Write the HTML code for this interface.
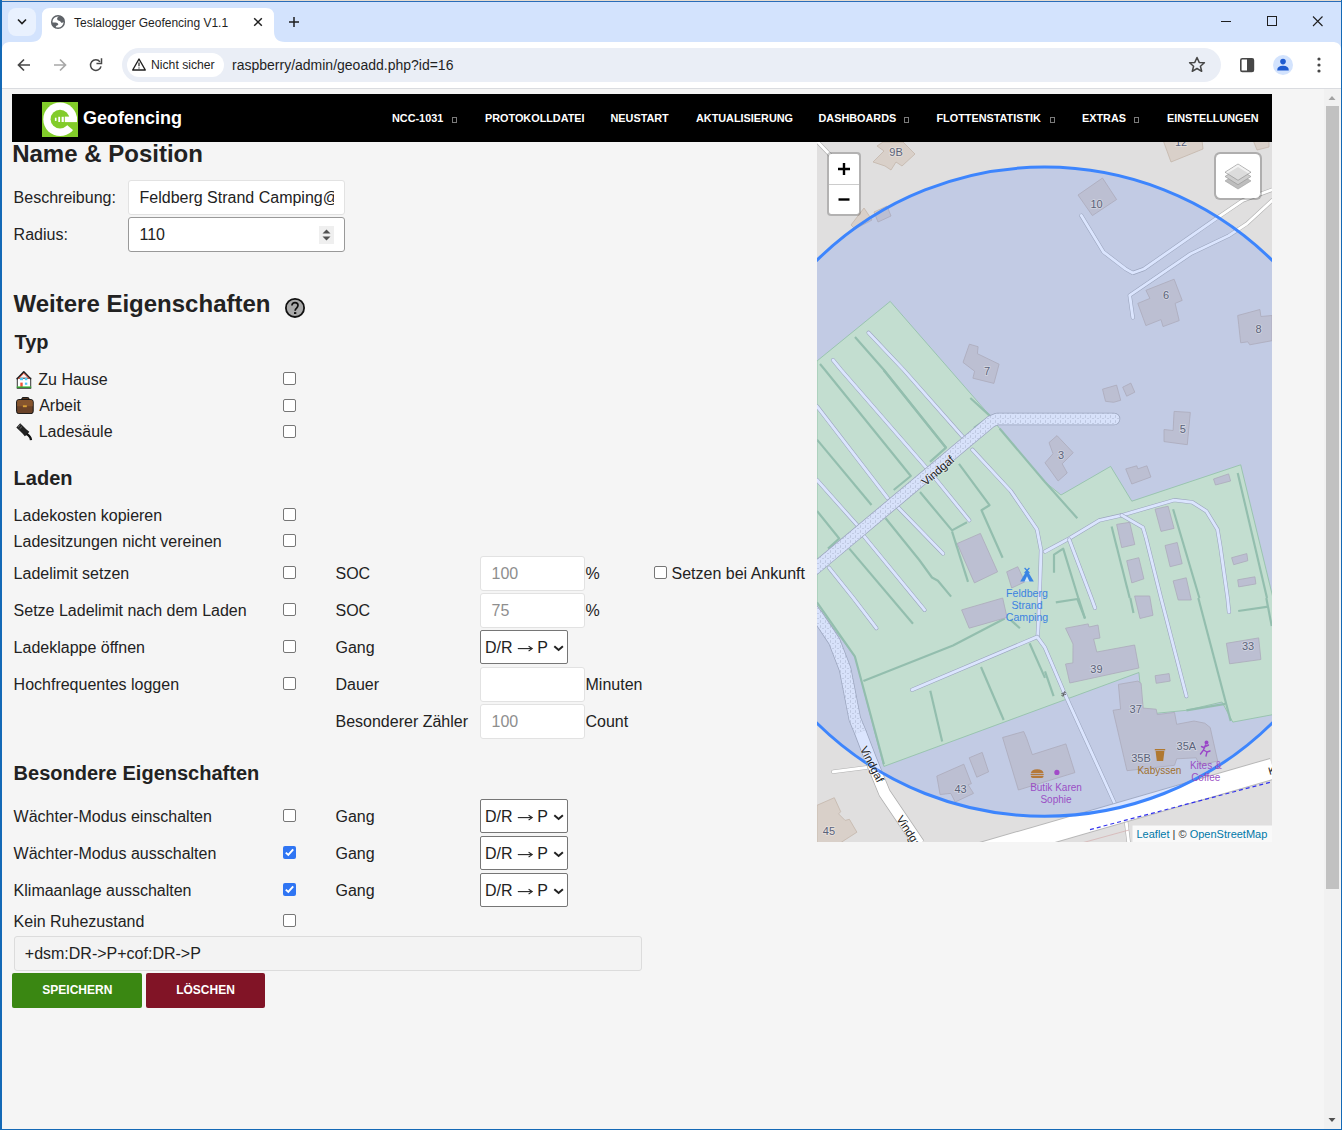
<!DOCTYPE html>
<html><head><meta charset="utf-8">
<style>
*{box-sizing:border-box}
html,body{margin:0;padding:0;width:1342px;height:1130px;overflow:hidden;background:#f5f5f5;font-family:"Liberation Sans",sans-serif;color:#222}
.a{position:absolute;white-space:nowrap}
#win{position:absolute;left:0;top:0;width:1342px;height:1130px;overflow:hidden}
.lbl{position:absolute;font-size:16px;line-height:16px;color:#222;white-space:nowrap}
.h{position:absolute;font-weight:bold;white-space:nowrap;color:#222}
.cb{position:absolute;width:13px;height:13px;border:1px solid #767676;border-radius:2px;background:#fff}
.cb.on{background:#2f76f4;border-color:#2f76f4}
.inp{position:absolute;background:#fff;border:1px solid #e6e6e6;border-radius:2px}
.sel{position:absolute;background:#fff;border:1px solid #767676;border-radius:2px}
.nav{position:absolute;top:112.6px;font-size:11px;line-height:11px;font-weight:bold;color:#fff;white-space:nowrap}
.dd{position:absolute;top:116px;width:5px;height:5px;border:1px solid #888}
</style></head><body>
<div id="win">
<!-- window frame -->
<div class="a" style="left:0;top:0;width:1342px;height:1px;background:#e6dccf"></div>
<div class="a" style="left:0;top:1px;width:1342px;height:1px;background:#2a6cb8"></div>
<div class="a" style="left:0;top:0;width:2px;height:1130px;background:#1469b6"></div>
<div class="a" style="left:1341px;top:0;width:1px;height:1130px;background:#1469b6"></div>
<div class="a" style="left:0;top:1129px;width:1342px;height:1px;background:#1469b6"></div>
<!-- tab strip -->
<div class="a" style="left:2px;top:2px;width:1339px;height:40px;background:#d3e3fd"></div>
<!-- page -->
<div class="a" style="left:2px;top:89px;width:1339px;height:1040px;background:#f5f5f5"></div>
<!-- toolbar -->
<div class="a" style="left:2px;top:42px;width:1339px;height:46px;background:#fff"></div>
<div class="a" style="left:2px;top:88px;width:1339px;height:1px;background:#dadce0"></div>

<svg class="a" style="left:0;top:0" width="1342" height="89" viewBox="0 0 1342 89">
 <!-- dropdown btn -->
 <rect x="8" y="8" width="28" height="28" rx="8" fill="#e9f1fe"/>
 <path d="M18 19.5 L22 23.5 L26 19.5" fill="none" stroke="#1f1f1f" stroke-width="1.6"/>
 <!-- active tab -->
 <path d="M31 42 Q42 42 42 31 L42 16 Q42 8 50 8 L266 8 Q274 8 274 16 L274 31 Q274 42 285 42 Z" fill="#fff"/>
 <path d="M2 42 L9 42 Q2.6 42.6 2 48.5 Z" fill="#d3e3fd"/>
 <path d="M1341 42 L1334 42 Q1340.4 42.6 1341 48.5 Z" fill="#d3e3fd"/>
 <!-- globe -->
 <circle cx="58" cy="22" r="6.3" fill="#fff" stroke="#5f6368" stroke-width="1.5"/>
 <path d="M59.2 16.1 Q57.2 17.2 57 19.1 Q57.4 20.6 59.6 20.9 Q60.9 21.5 61.2 22.8 Q62.9 23.1 64.4 21.6 L64.2 18.6 Q62.3 15.9 59.2 16.1 Z" fill="#5f6368"/>
 <path d="M51.8 22.4 L55.6 22.4 Q57.8 22.6 58.4 24.2 Q57.8 25.5 56.4 25.7 Q55.6 26.5 55.6 28.2 Q52.6 27.2 51.8 24 Z" fill="#5f6368"/>
 <!-- close x -->
 <path d="M254.2 18.2 L261.8 25.8 M261.8 18.2 L254.2 25.8" stroke="#1f1f1f" stroke-width="1.5"/>
 <!-- plus -->
 <path d="M289 22 L299 22 M294 17 L294 27" stroke="#1f1f1f" stroke-width="1.5"/>
 <!-- window controls -->
 <path d="M1221 21.5 L1231 21.5" stroke="#1f1f1f" stroke-width="1"/>
 <rect x="1267.5" y="16.5" width="9" height="9" fill="none" stroke="#1f1f1f" stroke-width="1"/>
 <path d="M1313 16.5 L1322.5 26 M1322.5 16.5 L1313 26" stroke="#1f1f1f" stroke-width="1.1"/>
 <!-- nav buttons -->
 <path d="M30 65 L19 65 M24 59.5 L18.5 65 L24 70.5" fill="none" stroke="#474747" stroke-width="1.7"/>
 <path d="M54 65 L65 65 M60 59.5 L65.5 65 L60 70.5" fill="none" stroke="#a8a8a8" stroke-width="1.7"/>
 <path d="M101.0 66.3 A5.3 5.3 0 1 1 100.0 61.9" fill="none" stroke="#474747" stroke-width="1.5"/>
 <path d="M97.2 63.4 L101.5 63.4 L101.5 59.1" fill="none" stroke="#474747" stroke-width="1.5" stroke-linecap="square"/>
 <!-- omnibox -->
 <rect x="122" y="48" width="1099" height="34" rx="17" fill="#eaeef6"/>
 <rect x="127" y="53" width="97" height="24" rx="12" fill="#fff"/>
 <path d="M139 59 L145.3 70 L132.7 70 Z" fill="none" stroke="#1f1f1f" stroke-width="1.4" stroke-linejoin="round"/>
 <path d="M139 62.5 L139 66.2 M139 67.5 L139 68.6" stroke="#1f1f1f" stroke-width="1.2"/>
 <!-- star -->
 <path d="M1197 57.5 L1199.2 62.4 L1204.4 62.8 L1200.4 66.2 L1201.7 71.3 L1197 68.5 L1192.3 71.3 L1193.6 66.2 L1189.6 62.8 L1194.8 62.4 Z" fill="none" stroke="#474747" stroke-width="1.5" stroke-linejoin="round"/>
 <!-- side panel -->
 <rect x="1240.8" y="58.8" width="12.6" height="12.6" rx="1.5" fill="none" stroke="#474747" stroke-width="1.6"/>
 <rect x="1247" y="58.8" width="6.4" height="12.6" fill="#474747"/>
 <!-- profile -->
 <circle cx="1283" cy="65" r="10" fill="#d3e3fd"/>
 <circle cx="1283" cy="61.6" r="2.8" fill="#1f5bd0"/>
 <path d="M1277.2 70.4 Q1277.2 65.8 1283 65.8 Q1288.8 65.8 1288.8 70.4 Z" fill="#1f5bd0"/>
 <!-- menu dots -->
 <circle cx="1319" cy="59" r="1.6" fill="#474747"/>
 <circle cx="1319" cy="65" r="1.6" fill="#474747"/>
 <circle cx="1319" cy="71" r="1.6" fill="#474747"/>
</svg>
<div class="a" style="left:74px;top:16.8px;font-size:12px;line-height:12px;color:#1f1f1f">Teslalogger Geofencing V1.1</div>
<div class="a" style="left:151px;top:59px;font-size:12.2px;line-height:12px;color:#1f1f1f">Nicht sicher</div>
<div class="a" style="left:232px;top:58px;font-size:14px;line-height:14px;color:#1f1f1f">raspberry/admin/geoadd.php?id=16</div>
<!-- scrollbar -->
<div class="a" style="left:1324px;top:89px;width:16px;height:1040px;background:#f1f1f1"></div>
<svg class="a" style="left:1324px;top:89px" width="16" height="1040">
 <path d="M4.5 11 L8 7 L11.5 11 Z" fill="#a3a3a3"/>
 <path d="M4.5 1029 L8 1033 L11.5 1029 Z" fill="#505050"/>
</svg>
<div class="a" style="left:1326px;top:106px;width:13px;height:783px;background:#c1c1c1"></div>


<div class="a" style="left:12px;top:94px;width:1260px;height:48px;background:#000"></div>
<svg class="a" style="left:42px;top:102px" width="36" height="35" viewBox="0 0 36 35">
 <rect width="36" height="35" fill="#82cc2a"/>
 <circle cx="18.1" cy="17.3" r="16.8" fill="#fff"/>
 <circle cx="18" cy="17.2" r="9.4" fill="#82cc2a"/>
 <polygon points="21.4,20.1 40,20.1 40,35.7" fill="#82cc2a"/>
 <rect x="22.8" y="14.6" width="12.2" height="5.5" fill="#fff"/>
 <rect x="12.9" y="15.7" width="1.6" height="3.2" fill="#fff"/>
 <rect x="16.3" y="14.8" width="1.8" height="5.2" fill="#fff"/>
 <rect x="19.6" y="14.8" width="2.2" height="5.2" fill="#fff"/>
</svg>
<div class="a" style="left:83px;top:109px;font-size:18px;line-height:18px;font-weight:bold;color:#fff;">Geofencing</div>
<div class="a" style="left:392px;top:113px;font-size:10.85px;line-height:10.85px;font-weight:bold;color:#fff;">NCC-1031</div>
<div class="a" style="left:452px;top:116.5px;width:5px;height:6px;border:1px solid #7a7a7a"></div>
<div class="a" style="left:485px;top:113px;font-size:10.85px;line-height:10.85px;font-weight:bold;color:#fff;">PROTOKOLLDATEI</div>
<div class="a" style="left:610.5px;top:113px;font-size:10.85px;line-height:10.85px;font-weight:bold;color:#fff;">NEUSTART</div>
<div class="a" style="left:696px;top:113px;font-size:10.85px;line-height:10.85px;font-weight:bold;color:#fff;">AKTUALISIERUNG</div>
<div class="a" style="left:818.5px;top:113px;font-size:10.85px;line-height:10.85px;font-weight:bold;color:#fff;">DASHBOARDS</div>
<div class="a" style="left:904.3px;top:116.5px;width:5px;height:6px;border:1px solid #7a7a7a"></div>
<div class="a" style="left:936.5px;top:113px;font-size:10.85px;line-height:10.85px;font-weight:bold;color:#fff;">FLOTTENSTATISTIK</div>
<div class="a" style="left:1050px;top:116.5px;width:5px;height:6px;border:1px solid #7a7a7a"></div>
<div class="a" style="left:1082px;top:113px;font-size:10.85px;line-height:10.85px;font-weight:bold;color:#fff;">EXTRAS</div>
<div class="a" style="left:1134.4px;top:116.5px;width:5px;height:6px;border:1px solid #7a7a7a"></div>
<div class="a" style="left:1167px;top:113px;font-size:10.85px;line-height:10.85px;font-weight:bold;color:#fff;">EINSTELLUNGEN</div>
<div class="a" style="left:12.2px;top:142px;font-size:24px;line-height:24px;font-weight:bold;color:#222;">Name &amp; Position</div>
<div class="a" style="left:13.6px;top:190px;font-size:16px;line-height:16px;color:#222;">Beschreibung:</div>
<div class="a" style="left:13.6px;top:227px;font-size:16px;line-height:16px;color:#222;">Radius:</div>
<div class="a" style="left:128px;top:180px;width:217px;height:34.5px;background:#fff;border:1px solid #e2e2e2;border-radius:3px"></div>
<div class="a" style="left:139px;top:187px;width:195px;height:20px;overflow:hidden"><div class="a" style="left:0.5px;top:3px;font-size:16px;line-height:16px;color:#222;">Feldberg Strand Camping@Vindgaf</div></div>
<div class="a" style="left:128px;top:217px;width:217px;height:35px;background:#fff;border:1px solid #999;border-radius:3px"></div>
<div class="a" style="left:139.5px;top:227px;font-size:16px;line-height:16px;color:#222;">110</div>
<svg class="a" style="left:319px;top:226px" width="15" height="18"><rect width="15" height="18" fill="#efefef"/>
<path d="M3.5 7.6 L7.5 3.6 L11.5 7.6 Z M3.5 10.6 L7.5 14.6 L11.5 10.6 Z" fill="#505050"/></svg>
<div class="a" style="left:13.5px;top:292px;font-size:24px;line-height:24px;font-weight:bold;color:#222;">Weitere Eigenschaften</div>
<svg class="a" style="left:284px;top:297px" width="22" height="22"><circle cx="11" cy="10.9" r="9.1" fill="#aaa" stroke="#111" stroke-width="1.8"/>
<path d="M7.9 8.5 Q8.2 5.6 11 5.6 Q14 5.6 14 8.3 Q14 9.7 12.6 11.1 Q11.2 12.4 11.1 13.7" fill="none" stroke="#111" stroke-width="1.7"/>
<rect x="10" y="15.1" width="2.3" height="1.9" fill="#111"/></svg>
<div class="a" style="left:14.5px;top:332px;font-size:20px;line-height:20px;font-weight:bold;color:#222;">Typ</div>
<svg class="a" style="left:16px;top:370.7px" width="17" height="18" viewBox="0 0 17 18">
 <rect x="1.3" y="7.2" width="13.4" height="9.6" fill="#fff" stroke="#333" stroke-width="1"/>
 <path d="M0.7 8.3 L7.8 0.9 L15 8.3" fill="none" stroke="#222" stroke-width="1.6" stroke-linejoin="round"/>
 <path d="M2.2 8 L7.8 2.3 L13.5 8" fill="none" stroke="#e2452e" stroke-width="1"/>
 <rect x="3.9" y="7" width="3.1" height="2.2" fill="#55c8f5"/><rect x="8.9" y="7" width="2.4" height="2.2" fill="#55c8f5"/>
 <rect x="8.9" y="11.6" width="2.4" height="2.2" fill="#55c8f5"/>
 <rect x="4.3" y="11.6" width="2.4" height="4.6" fill="#f0533a"/>
 <rect x="0.8" y="15.4" width="14.4" height="1.6" fill="#3fb83a"/>
 <rect x="0.8" y="16.8" width="14.4" height="0.8" fill="#222"/>
</svg>
<svg class="a" style="left:16px;top:397px" width="18" height="17" viewBox="0 0 18 17">
 <rect x="5.8" y="0.6" width="7.2" height="3" rx="1.2" fill="#5a3a22" stroke="#111" stroke-width="1"/>
 <rect x="0.6" y="2.6" width="16.6" height="14" rx="2.2" fill="#6a4228" stroke="#111" stroke-width="1"/>
 <path d="M1.1 4.8 Q1.1 3.1 2.8 3.1 L15 3.1 Q16.7 3.1 16.7 4.8 L16.7 9.3 L1.1 9.3 Z" fill="#86552e"/>
 <rect x="6.9" y="8.3" width="3.9" height="1.9" fill="#dba236"/>
</svg>
<svg class="a" style="left:16px;top:422.5px" width="17" height="18" viewBox="0 0 17 18">
 <path d="M4.2 0.3 L10.5 6.5 L13.3 8.8 L11.5 11.2 L8.8 13.2 L6.5 10.6 L0.3 4.6 Z" fill="#222"/>
 <path d="M2 4.2 L4.4 1.9 M3.6 5.8 L6 3.5" stroke="#777" stroke-width="0.9"/>
 <path d="M10.5 11 Q14.6 13 15 17.2" fill="none" stroke="#111" stroke-width="2.3"/>
</svg>
<div class="a" style="left:38.3px;top:372px;font-size:16px;line-height:16px;color:#222;">Zu Hause</div>
<div class="a" style="left:39.2px;top:398px;font-size:16px;line-height:16px;color:#222;">Arbeit</div>
<div class="a" style="left:38.7px;top:424px;font-size:16px;line-height:16px;color:#222;">Ladesäule</div>
<div class="a" style="left:283px;top:372.4px;width:13px;height:13px;border:1px solid #767676;border-radius:2px;background:#fff"></div>
<div class="a" style="left:283px;top:398.5px;width:13px;height:13px;border:1px solid #767676;border-radius:2px;background:#fff"></div>
<div class="a" style="left:283px;top:424.5px;width:13px;height:13px;border:1px solid #767676;border-radius:2px;background:#fff"></div>
<div class="a" style="left:13.6px;top:468px;font-size:20px;line-height:20px;font-weight:bold;color:#222;">Laden</div>
<div class="a" style="left:13.6px;top:508px;font-size:16px;line-height:16px;color:#222;">Ladekosten kopieren</div>
<div class="a" style="left:283px;top:508px;width:13px;height:13px;border:1px solid #767676;border-radius:2px;background:#fff"></div>
<div class="a" style="left:13.6px;top:534px;font-size:16px;line-height:16px;color:#222;">Ladesitzungen nicht vereinen</div>
<div class="a" style="left:283px;top:534px;width:13px;height:13px;border:1px solid #767676;border-radius:2px;background:#fff"></div>
<div class="a" style="left:13.6px;top:566px;font-size:16px;line-height:16px;color:#222;">Ladelimit setzen</div>
<div class="a" style="left:283px;top:566px;width:13px;height:13px;border:1px solid #767676;border-radius:2px;background:#fff"></div>
<div class="a" style="left:13.6px;top:603px;font-size:16px;line-height:16px;color:#222;">Setze Ladelimit nach dem Laden</div>
<div class="a" style="left:283px;top:603px;width:13px;height:13px;border:1px solid #767676;border-radius:2px;background:#fff"></div>
<div class="a" style="left:13.6px;top:640px;font-size:16px;line-height:16px;color:#222;">Ladeklappe öffnen</div>
<div class="a" style="left:283px;top:640px;width:13px;height:13px;border:1px solid #767676;border-radius:2px;background:#fff"></div>
<div class="a" style="left:13.6px;top:677px;font-size:16px;line-height:16px;color:#222;">Hochfrequentes loggen</div>
<div class="a" style="left:283px;top:677px;width:13px;height:13px;border:1px solid #767676;border-radius:2px;background:#fff"></div>
<div class="a" style="left:335.5px;top:566px;font-size:16px;line-height:16px;color:#222;">SOC</div>
<div class="a" style="left:480px;top:556px;width:105px;height:34.5px;background:#fff;border:1px solid #e2e2e2;border-radius:3px"></div><div class="a" style="left:491.5px;top:566px;font-size:16px;line-height:16px;color:#8e8e8e;">100</div>
<div class="a" style="left:585.5px;top:566px;font-size:16px;line-height:16px;color:#222;">%</div>
<div class="a" style="left:335.5px;top:603px;font-size:16px;line-height:16px;color:#222;">SOC</div>
<div class="a" style="left:480px;top:593px;width:105px;height:34.5px;background:#fff;border:1px solid #e2e2e2;border-radius:3px"></div><div class="a" style="left:491.5px;top:603px;font-size:16px;line-height:16px;color:#8e8e8e;">75</div>
<div class="a" style="left:585.5px;top:603px;font-size:16px;line-height:16px;color:#222;">%</div>
<div class="a" style="left:335.5px;top:640px;font-size:16px;line-height:16px;color:#222;">Gang</div>
<div class="a" style="left:480px;top:630px;width:88px;height:34.2px;background:#fff;border:1px solid #767676;border-radius:2px"></div><div class="a" style="left:485px;top:640px;font-size:16px;line-height:16px;color:#222;">D/R</div><div class="a" style="left:537.3px;top:640px;font-size:16px;line-height:16px;color:#222;">P</div><svg class="a" style="left:516px;top:644px" width="18" height="9"><path d="M1.8 4.6 L15.6 4.6" stroke="#222" stroke-width="1.1"/><path d="M12.6 2.2 L16.2 4.6 L12.6 7" fill="none" stroke="#222" stroke-width="1.1"/></svg><svg class="a" style="left:551px;top:643px" width="14" height="10"><path d="M3.3 3.2 L7.6 7 L11.9 3.2" fill="none" stroke="#222" stroke-width="2"/></svg>
<div class="a" style="left:335.5px;top:677px;font-size:16px;line-height:16px;color:#222;">Dauer</div>
<div class="a" style="left:480px;top:667px;width:105px;height:34.5px;background:#fff;border:1px solid #e2e2e2;border-radius:3px"></div>
<div class="a" style="left:585.5px;top:677px;font-size:16px;line-height:16px;color:#222;">Minuten</div>
<div class="a" style="left:335.5px;top:714px;font-size:16px;line-height:16px;color:#222;">Besonderer Zähler</div>
<div class="a" style="left:480px;top:704px;width:105px;height:34.5px;background:#fff;border:1px solid #e2e2e2;border-radius:3px"></div><div class="a" style="left:491.5px;top:714px;font-size:16px;line-height:16px;color:#8e8e8e;">100</div>
<div class="a" style="left:585.5px;top:714px;font-size:16px;line-height:16px;color:#222;">Count</div>
<div class="a" style="left:654px;top:566.4px;width:13px;height:13px;border:1px solid #767676;border-radius:2px;background:#fff"></div>
<div class="a" style="left:671.5px;top:566px;font-size:16px;line-height:16px;color:#222;">Setzen bei Ankunft</div>
<div class="a" style="left:13.6px;top:763px;font-size:20px;line-height:20px;font-weight:bold;color:#222;">Besondere Eigenschaften</div>
<div class="a" style="left:13.6px;top:809px;font-size:16px;line-height:16px;color:#222;">Wächter-Modus einschalten</div>
<div class="a" style="left:283px;top:809px;width:13px;height:13px;border:1px solid #767676;border-radius:2px;background:#fff"></div>
<div class="a" style="left:335.5px;top:809px;font-size:16px;line-height:16px;color:#222;">Gang</div>
<div class="a" style="left:480px;top:799px;width:88px;height:34.2px;background:#fff;border:1px solid #767676;border-radius:2px"></div><div class="a" style="left:485px;top:809px;font-size:16px;line-height:16px;color:#222;">D/R</div><div class="a" style="left:537.3px;top:809px;font-size:16px;line-height:16px;color:#222;">P</div><svg class="a" style="left:516px;top:813px" width="18" height="9"><path d="M1.8 4.6 L15.6 4.6" stroke="#222" stroke-width="1.1"/><path d="M12.6 2.2 L16.2 4.6 L12.6 7" fill="none" stroke="#222" stroke-width="1.1"/></svg><svg class="a" style="left:551px;top:812px" width="14" height="10"><path d="M3.3 3.2 L7.6 7 L11.9 3.2" fill="none" stroke="#222" stroke-width="2"/></svg>
<div class="a" style="left:13.6px;top:846px;font-size:16px;line-height:16px;color:#222;">Wächter-Modus ausschalten</div>
<svg class="a" style="left:283px;top:846px" width="13" height="13"><rect x="0" y="0" width="13" height="13" rx="2" fill="#2f75f3"/><path d="M2.8 6.6 L5.3 9 L10.2 3.4" fill="none" stroke="#fff" stroke-width="1.9"/></svg>
<div class="a" style="left:335.5px;top:846px;font-size:16px;line-height:16px;color:#222;">Gang</div>
<div class="a" style="left:480px;top:836px;width:88px;height:34.2px;background:#fff;border:1px solid #767676;border-radius:2px"></div><div class="a" style="left:485px;top:846px;font-size:16px;line-height:16px;color:#222;">D/R</div><div class="a" style="left:537.3px;top:846px;font-size:16px;line-height:16px;color:#222;">P</div><svg class="a" style="left:516px;top:850px" width="18" height="9"><path d="M1.8 4.6 L15.6 4.6" stroke="#222" stroke-width="1.1"/><path d="M12.6 2.2 L16.2 4.6 L12.6 7" fill="none" stroke="#222" stroke-width="1.1"/></svg><svg class="a" style="left:551px;top:849px" width="14" height="10"><path d="M3.3 3.2 L7.6 7 L11.9 3.2" fill="none" stroke="#222" stroke-width="2"/></svg>
<div class="a" style="left:13.6px;top:883px;font-size:16px;line-height:16px;color:#222;">Klimaanlage ausschalten</div>
<svg class="a" style="left:283px;top:883px" width="13" height="13"><rect x="0" y="0" width="13" height="13" rx="2" fill="#2f75f3"/><path d="M2.8 6.6 L5.3 9 L10.2 3.4" fill="none" stroke="#fff" stroke-width="1.9"/></svg>
<div class="a" style="left:335.5px;top:883px;font-size:16px;line-height:16px;color:#222;">Gang</div>
<div class="a" style="left:480px;top:873px;width:88px;height:34.2px;background:#fff;border:1px solid #767676;border-radius:2px"></div><div class="a" style="left:485px;top:883px;font-size:16px;line-height:16px;color:#222;">D/R</div><div class="a" style="left:537.3px;top:883px;font-size:16px;line-height:16px;color:#222;">P</div><svg class="a" style="left:516px;top:887px" width="18" height="9"><path d="M1.8 4.6 L15.6 4.6" stroke="#222" stroke-width="1.1"/><path d="M12.6 2.2 L16.2 4.6 L12.6 7" fill="none" stroke="#222" stroke-width="1.1"/></svg><svg class="a" style="left:551px;top:886px" width="14" height="10"><path d="M3.3 3.2 L7.6 7 L11.9 3.2" fill="none" stroke="#222" stroke-width="2"/></svg>
<div class="a" style="left:13.6px;top:914px;font-size:16px;line-height:16px;color:#222;">Kein Ruhezustand</div>
<div class="a" style="left:283px;top:914px;width:13px;height:13px;border:1px solid #767676;border-radius:2px;background:#fff"></div>
<div class="a" style="left:14px;top:936px;width:628px;height:35px;background:#f3f3f3;border:1px solid #dcdcdc;border-radius:3px"></div>
<div class="a" style="left:24.8px;top:946px;font-size:16px;line-height:16px;color:#222;">+dsm:DR-&gt;P+cof:DR-&gt;P</div>
<div class="a" style="left:12.3px;top:973.2px;width:129.4px;height:34.5px;background:#3a8712;border-radius:2px"></div>
<div class="a" style="left:146.2px;top:973.2px;width:118.5px;height:34.5px;background:#811426;border-radius:2px"></div>
<div class="a" style="left:42.3px;top:984px;font-size:12px;line-height:12px;font-weight:bold;color:#fff;">SPEICHERN</div>
<div class="a" style="left:176.2px;top:984px;font-size:12px;line-height:12px;font-weight:bold;color:#fff;">LÖSCHEN</div>
<svg class="a" style="left:817px;top:142px" width="455" height="700" viewBox="0 0 455 700"><rect width="455" height="700" fill="#e0dfdf"/>
<polygon points="73.2,159.4 173.5,274.4 182.6,286.5 228,340 244,353 293.6,324.4 314.8,359.2 423.7,322.8 456,456 456,572.6 415.8,580.1 405,560 369.4,568.3 326.2,572.6 321.9,530.5 66.9,624.4 37.8,514.3 0,464.6 0,219" fill="#e2f7c6" stroke="#9fd08f" stroke-width="0.8"/>
<polyline points="3,222 8,228 93.8,334 76.7,348" fill="none" stroke="#a6cf9c" stroke-width="2.2" stroke-linecap="butt" stroke-linejoin="round"/>
<polyline points="38,195 67,228 129,305.7 113,319.8" fill="none" stroke="#a6cf9c" stroke-width="2.2" stroke-linecap="butt" stroke-linejoin="round"/>
<polyline points="66.6,228 129,305.7" fill="none" stroke="#a6cf9c" stroke-width="2.2" stroke-linecap="butt" stroke-linejoin="round"/>
<polyline points="0,297.6 54.5,363" fill="none" stroke="#a6cf9c" stroke-width="2.2" stroke-linecap="butt" stroke-linejoin="round"/>
<polyline points="153.3,256 173.5,274.4 157,286" fill="none" stroke="#a6cf9c" stroke-width="2.2" stroke-linecap="butt" stroke-linejoin="round"/>
<polyline points="0,369 22.2,396.5 11,406.6" fill="none" stroke="#a6cf9c" stroke-width="2.2" stroke-linecap="butt" stroke-linejoin="round"/>
<polyline points="103,350 135,388.4 150,380.3" fill="none" stroke="#a6cf9c" stroke-width="2.2" stroke-linecap="butt" stroke-linejoin="round"/>
<polyline points="135,389.4 151,439.9" fill="none" stroke="#a6cf9c" stroke-width="2.2" stroke-linecap="butt" stroke-linejoin="round"/>
<polyline points="142,321.8 172.5,363.2 164.5,368.2 185.6,415.7" fill="none" stroke="#a6cf9c" stroke-width="2.2" stroke-linecap="butt" stroke-linejoin="round"/>
<polyline points="68.6,376.3 102.3,418 115,435.5 120.9,438.7 134.1,454.6" fill="none" stroke="#a6cf9c" stroke-width="2.2" stroke-linecap="butt" stroke-linejoin="round"/>
<polyline points="32.3,406.6 96,481.7" fill="none" stroke="#a6cf9c" stroke-width="2.2" stroke-linecap="butt" stroke-linejoin="round"/>
<polyline points="182.6,286.5 228,340 260.3,376.3" fill="none" stroke="#a6cf9c" stroke-width="2.2" stroke-linecap="butt" stroke-linejoin="round"/>
<polyline points="294.6,384.4 312.7,456" fill="none" stroke="#a6cf9c" stroke-width="2.2" stroke-linecap="butt" stroke-linejoin="round"/>
<polyline points="356.1,367.2 382.4,456" fill="none" stroke="#a6cf9c" stroke-width="2.2" stroke-linecap="butt" stroke-linejoin="round"/>
<polyline points="420.7,330.9 450,456" fill="none" stroke="#a6cf9c" stroke-width="2.2" stroke-linecap="butt" stroke-linejoin="round"/>
<polyline points="237,430.8 237,412.6 246.2,406.6 261.3,456" fill="none" stroke="#a6cf9c" stroke-width="2.2" stroke-linecap="butt" stroke-linejoin="round"/>
<polyline points="0,460.3 37.8,514.3 66.9,622.2" fill="none" stroke="#a6cf9c" stroke-width="2.2" stroke-linecap="butt" stroke-linejoin="round"/>
<polyline points="46.4,539.1 136,503.5 187.8,476.5" fill="none" stroke="#a6cf9c" stroke-width="2.2" stroke-linecap="butt" stroke-linejoin="round"/>
<polyline points="113.3,548.8 125.2,599.6" fill="none" stroke="#a6cf9c" stroke-width="2.2" stroke-linecap="butt" stroke-linejoin="round"/>
<polyline points="164,525 186.7,578" fill="none" stroke="#a6cf9c" stroke-width="2.2" stroke-linecap="butt" stroke-linejoin="round"/>
<polyline points="212.6,501.3 228,535.9" fill="none" stroke="#a6cf9c" stroke-width="2.2" stroke-linecap="butt" stroke-linejoin="round"/>
<polyline points="193.2,477.6 202.9,486.2" fill="none" stroke="#a6cf9c" stroke-width="2.2" stroke-linecap="butt" stroke-linejoin="round"/>
<polyline points="261.5,456 268,476.5" fill="none" stroke="#a6cf9c" stroke-width="2.2" stroke-linecap="butt" stroke-linejoin="round"/>
<polyline points="238.8,460.3 260.4,457 268,476.5" fill="none" stroke="#a6cf9c" stroke-width="2.2" stroke-linecap="butt" stroke-linejoin="round"/>
<polyline points="313.3,456 316.5,471.1" fill="none" stroke="#a6cf9c" stroke-width="2.2" stroke-linecap="butt" stroke-linejoin="round"/>
<polyline points="381.3,456 413.7,579" fill="none" stroke="#a6cf9c" stroke-width="2.2" stroke-linecap="butt" stroke-linejoin="round"/>
<polyline points="421.2,469 451.4,464.6" fill="none" stroke="#a6cf9c" stroke-width="2.2" stroke-linecap="butt" stroke-linejoin="round"/>
<polyline points="449.3,456 454.7,484" fill="none" stroke="#a6cf9c" stroke-width="2.2" stroke-linecap="butt" stroke-linejoin="round"/>
<polyline points="369.4,568.3 408.3,561.8" fill="none" stroke="#a6cf9c" stroke-width="2.2" stroke-linecap="butt" stroke-linejoin="round"/>
<polyline points="228,529.4 236.6,554.2" fill="none" stroke="#a6cf9c" stroke-width="2.2" stroke-linecap="butt" stroke-linejoin="round"/>
<polygon points="56,20 67,9 60,4 66,0 86,0 98,12 85,24 79,20 74,28 68,24" fill="#d9d0c9" stroke="#c4b6ab" stroke-width="0.8"/>
<polygon points="34,83 47,66 55,78 38,87" fill="#d9d0c9" stroke="#c4b6ab" stroke-width="0.8"/>
<polygon points="57,70 70,64 74,74 61,80" fill="#d9d0c9" stroke="#c4b6ab" stroke-width="0.8"/>
<polygon points="346,-2 385,-2 386,7 354,20" fill="#d9d0c9" stroke="#c4b6ab" stroke-width="0.8"/>
<polygon points="436,-2 452,-2 452,5 440,8" fill="#d9d0c9" stroke="#c4b6ab" stroke-width="0.8"/>
<polygon points="261,53 285.5,36 299.6,57.5 275.4,73.6" fill="#d9d0c9" stroke="#c4b6ab" stroke-width="0.8"/>
<polygon points="328.9,148.3 357.1,137.2 365.2,158.4 358.1,161.4 362.2,178.6 346,184.6 344,177.6 328.9,183.6 320.8,161.4 332.9,156.4" fill="#d9d0c9" stroke="#c4b6ab" stroke-width="0.8"/>
<polygon points="420.7,173.5 442.9,167.5 443.9,174.5 455,173.5 455,198.7 432.8,202.8 430.8,199.8 423.7,200.8 421.7,182.6" fill="#d9d0c9" stroke="#c4b6ab" stroke-width="0.8"/>
<polygon points="152.4,202.2 161.1,204.7 160.4,211.7 182.1,222.2 176.9,241.4 155.9,236.2 157.6,229.2 146,220.4" fill="#d9d0c9" stroke="#c4b6ab" stroke-width="0.8"/>
<polygon points="240,293.6 256.2,310.7 245.2,321.8 250.2,331 241.1,339 228,320.8 236,311.7 232,300.6" fill="#d9d0c9" stroke="#c4b6ab" stroke-width="0.8"/>
<polygon points="285.5,247.2 299.6,243.1 303.7,258.3 296.6,260.3 288.5,259.3" fill="#d9d0c9" stroke="#c4b6ab" stroke-width="0.8"/>
<polygon points="305.7,245.2 313.8,241.1 317.8,250.2 309.7,254.2" fill="#d9d0c9" stroke="#c4b6ab" stroke-width="0.8"/>
<polygon points="357.1,269.4 373.3,270.4 370.3,302.7 347,299.6 347,287.5 356.1,288.5" fill="#d9d0c9" stroke="#c4b6ab" stroke-width="0.8"/>
<polygon points="308.7,326.9 319.8,323.8 320.8,326.9 329.9,323.8 333.9,335 314.8,342" fill="#d9d0c9" stroke="#c4b6ab" stroke-width="0.8"/>
<polygon points="140.2,401.5 163.4,391.4 180.6,429.8 157.4,440.9" fill="#d9d0c9" stroke="#c4b6ab" stroke-width="0.8"/>
<polygon points="189.7,429.8 200.8,424.7 207.8,439.9 194.7,446" fill="#d9d0c9" stroke="#c4b6ab" stroke-width="0.8"/>
<polygon points="338,367.2 351.1,364.2 357.1,386.4 344,389.4" fill="#d9d0c9" stroke="#c4b6ab" stroke-width="0.8"/>
<polygon points="299.6,382.4 312.7,380.3 317.8,402.5 304.7,405.6" fill="#d9d0c9" stroke="#c4b6ab" stroke-width="0.8"/>
<polygon points="348,403.5 360.2,400.5 365.2,421.7 353.1,424.7" fill="#d9d0c9" stroke="#c4b6ab" stroke-width="0.8"/>
<polygon points="309.7,418.7 321.8,415.7 326.9,436.8 314.8,440.9" fill="#d9d0c9" stroke="#c4b6ab" stroke-width="0.8"/>
<polygon points="356.1,438.9 369.2,435.8 374.3,458 361.2,458" fill="#d9d0c9" stroke="#c4b6ab" stroke-width="0.8"/>
<polygon points="396.5,337 411.6,331.9 413.6,339 398.5,343" fill="#d9d0c9" stroke="#c4b6ab" stroke-width="0.8"/>
<polygon points="414.6,415.7 429.8,411.6 430.8,418.7 416.7,422.7" fill="#d9d0c9" stroke="#c4b6ab" stroke-width="0.8"/>
<polygon points="420.7,437.8 437.9,434.8 438.9,441.9 421.7,444.9" fill="#d9d0c9" stroke="#c4b6ab" stroke-width="0.8"/>
<polygon points="144.6,467.9 185.7,456 190,475.4 152.2,486.2" fill="#d9d0c9" stroke="#c4b6ab" stroke-width="0.8"/>
<polygon points="119.8,634.1 146.8,622.2 154.4,641.7 151.1,642.7 156.5,651.4 138.2,660 133.8,651.4 123.1,652.5" fill="#d9d0c9" stroke="#c4b6ab" stroke-width="0.8"/>
<polygon points="152.2,615.8 165.2,610.4 171.6,629.8 159.8,635.2" fill="#d9d0c9" stroke="#c4b6ab" stroke-width="0.8"/>
<polygon points="0,663.3 17.3,655.7 23.7,669.7 21.6,671.9 28.1,678.4 32.4,677.3 39.9,690.2 21.6,702 0,702" fill="#d9d0c9" stroke="#c4b6ab" stroke-width="0.8"/>
<polygon points="317.6,454 332.7,454 336,473.3 323,476.5" fill="#d9d0c9" stroke="#c4b6ab" stroke-width="0.8"/>
<polygon points="409.4,501.3 441.7,495.9 443.9,517.5 412.6,521.8" fill="#d9d0c9" stroke="#c4b6ab" stroke-width="0.8"/>
<polygon points="338.1,533.7 352.1,531.6 353.2,539.1 339.2,541.3" fill="#d9d0c9" stroke="#c4b6ab" stroke-width="0.8"/>
<polygon points="248.5,486.2 271.2,481.9 272,485 281,483 283,496 276.6,497 279.8,510 317.6,503 321.9,526 252.8,541 248.5,522 255.9,520.9 256,502" fill="#d9d0c9" stroke="#c4b6ab" stroke-width="0.8"/>
<polygon points="301.4,542.4 320.8,539.1 324.1,541.3 326.2,566.1 339.2,567.2 340.3,572.6 357.5,570.4 359.7,582.3 377,579 387.8,581.2 393.2,585.5 400.7,619 382.4,623.3 379.1,615.8 359.7,616.8 357.5,623.3 310,628.7 296,568.3 303.6,567.2" fill="#d9d0c9" stroke="#c4b6ab" stroke-width="0.8"/>
<polygon points="185.6,595.5 206.7,589.5 209.6,596.2 215.3,612.6 248.9,601.9 257.9,630.6 201.4,648" fill="#d9d0c9" stroke="#c4b6ab" stroke-width="0.8"/>
<polyline points="-5,-6 16,16" fill="none" stroke="#b0b0b0" stroke-width="4.0" stroke-linecap="round" stroke-linejoin="round"/><polyline points="-5,-6 16,16" fill="none" stroke="#fff" stroke-width="2.9" stroke-linecap="round" stroke-linejoin="round"/>
<polyline points="264.3,73.6 286.5,110 308.7,127 315.8,131 326.9,127 397.5,77.7 425.7,58.5 460,46" fill="none" stroke="#b0b0b0" stroke-width="4.0" stroke-linecap="round" stroke-linejoin="round"/><polyline points="264.3,73.6 286.5,110 308.7,127 315.8,131 326.9,127 397.5,77.7 425.7,58.5 460,46" fill="none" stroke="#fff" stroke-width="2.9" stroke-linecap="round" stroke-linejoin="round"/>
<polyline points="315.8,175.5 312.7,153.4 373.3,112 411.6,93.8 429.8,81.7 460,54" fill="none" stroke="#b0b0b0" stroke-width="4.0" stroke-linecap="round" stroke-linejoin="round"/><polyline points="315.8,175.5 312.7,153.4 373.3,112 411.6,93.8 429.8,81.7 460,54" fill="none" stroke="#fff" stroke-width="2.9" stroke-linecap="round" stroke-linejoin="round"/>
<polyline points="16,218 24.2,228 113,330 152.3,378.3" fill="none" stroke="#b0b0b0" stroke-width="4.0" stroke-linecap="round" stroke-linejoin="round"/><polyline points="16,218 24.2,228 113,330 152.3,378.3" fill="none" stroke="#fff" stroke-width="2.9" stroke-linecap="round" stroke-linejoin="round"/>
<polyline points="51.5,190.7 86.8,228 148.3,297.6" fill="none" stroke="#b0b0b0" stroke-width="4.0" stroke-linecap="round" stroke-linejoin="round"/><polyline points="51.5,190.7 86.8,228 148.3,297.6" fill="none" stroke="#fff" stroke-width="2.9" stroke-linecap="round" stroke-linejoin="round"/>
<polyline points="155.4,307.7 193.7,349 220,387.4 224,408 222.5,456 220.7,494.9" fill="none" stroke="#b0b0b0" stroke-width="4.0" stroke-linecap="round" stroke-linejoin="round"/><polyline points="155.4,307.7 193.7,349 220,387.4 224,408 222.5,456 220.7,494.9" fill="none" stroke="#fff" stroke-width="2.9" stroke-linecap="round" stroke-linejoin="round"/>
<polyline points="0,264.3 70.6,356" fill="none" stroke="#b0b0b0" stroke-width="4.0" stroke-linecap="round" stroke-linejoin="round"/><polyline points="0,264.3 70.6,356" fill="none" stroke="#fff" stroke-width="2.9" stroke-linecap="round" stroke-linejoin="round"/>
<polyline points="80.7,365 126,411.6" fill="none" stroke="#b0b0b0" stroke-width="4.0" stroke-linecap="round" stroke-linejoin="round"/><polyline points="80.7,365 126,411.6" fill="none" stroke="#fff" stroke-width="2.9" stroke-linecap="round" stroke-linejoin="round"/>
<polyline points="0,338 40.4,383.4" fill="none" stroke="#b0b0b0" stroke-width="4.0" stroke-linecap="round" stroke-linejoin="round"/><polyline points="0,338 40.4,383.4" fill="none" stroke="#fff" stroke-width="2.9" stroke-linecap="round" stroke-linejoin="round"/>
<polyline points="46.4,393.5 107.6,467.9" fill="none" stroke="#b0b0b0" stroke-width="4.0" stroke-linecap="round" stroke-linejoin="round"/><polyline points="46.4,393.5 107.6,467.9" fill="none" stroke="#fff" stroke-width="2.9" stroke-linecap="round" stroke-linejoin="round"/>
<polyline points="12,425.7 36.3,456 59.4,486.2" fill="none" stroke="#b0b0b0" stroke-width="4.0" stroke-linecap="round" stroke-linejoin="round"/><polyline points="12,425.7 36.3,456 59.4,486.2" fill="none" stroke="#fff" stroke-width="2.9" stroke-linecap="round" stroke-linejoin="round"/>
<polyline points="95,547.8 220.2,494.9 228,505.7 246.4,548.8 297.1,660 300,668" fill="none" stroke="#b0b0b0" stroke-width="4.0" stroke-linecap="round" stroke-linejoin="round"/><polyline points="95,547.8 220.2,494.9 228,505.7 246.4,548.8 297.1,660 300,668" fill="none" stroke="#fff" stroke-width="2.9" stroke-linecap="round" stroke-linejoin="round"/>
<polyline points="228,409.6 252.2,396.5 282.5,378.3 304.7,373.3 357.1,358.1 375.3,360.2 389.4,369.2 400.5,387.4 403.5,405.6 410.6,456 412,470" fill="none" stroke="#b0b0b0" stroke-width="4.0" stroke-linecap="round" stroke-linejoin="round"/><polyline points="228,409.6 252.2,396.5 282.5,378.3 304.7,373.3 357.1,358.1 375.3,360.2 389.4,369.2 400.5,387.4 403.5,405.6 410.6,456 412,470" fill="none" stroke="#fff" stroke-width="2.9" stroke-linecap="round" stroke-linejoin="round"/>
<polyline points="304.7,373.3 325.9,385.4 328.9,395.5 344,456 369.4,554.2" fill="none" stroke="#b0b0b0" stroke-width="4.0" stroke-linecap="round" stroke-linejoin="round"/><polyline points="304.7,373.3 325.9,385.4 328.9,395.5 344,456 369.4,554.2" fill="none" stroke="#fff" stroke-width="2.9" stroke-linecap="round" stroke-linejoin="round"/>
<polyline points="252.2,397.5 274.4,456 278,466" fill="none" stroke="#b0b0b0" stroke-width="4.0" stroke-linecap="round" stroke-linejoin="round"/><polyline points="252.2,397.5 274.4,456 278,466" fill="none" stroke="#fff" stroke-width="2.9" stroke-linecap="round" stroke-linejoin="round"/>
<polyline points="16.2,629.8 49.7,625.5" fill="none" stroke="#b0b0b0" stroke-width="4.0" stroke-linecap="round" stroke-linejoin="round"/><polyline points="16.2,629.8 49.7,625.5" fill="none" stroke="#fff" stroke-width="2.9" stroke-linecap="round" stroke-linejoin="round"/>
<polyline points="309,678.4 312.2,705" fill="none" stroke="#b0b0b0" stroke-width="4.0" stroke-linecap="round" stroke-linejoin="round"/><polyline points="309,678.4 312.2,705" fill="none" stroke="#fff" stroke-width="2.9" stroke-linecap="round" stroke-linejoin="round"/>
<polyline points="150,715 456,626.5" fill="none" stroke="#b8b8b8" stroke-width="22" stroke-linecap="butt" stroke-linejoin="round"/>
<polyline points="150,715 456,626.5" fill="none" stroke="#fff" stroke-width="20" stroke-linecap="butt" stroke-linejoin="round"/>
<polyline points="273,687.6 456,639.5" fill="none" stroke="#3333ee" stroke-width="1.2" stroke-dasharray="4,3"/>
<polyline points="250,705 312,688" fill="none" stroke="#d6b4b4" stroke-width="0.8" stroke-linecap="butt" stroke-linejoin="round"/>
<defs><pattern id="dots" width="5" height="5" patternUnits="userSpaceOnUse"><rect width="5" height="5" fill="#fafafa"/><circle cx="1" cy="1.5" r="0.45" fill="#8a8a8a"/><circle cx="3.6" cy="4" r="0.45" fill="#8a8a8a"/><circle cx="3.2" cy="0.6" r="0.35" fill="#a0a0a0"/></pattern></defs>
<polyline points="-12,435 174,279.5 180,277 297,277" fill="none" stroke="#b0b0b0" stroke-width="12.5" stroke-linecap="round" stroke-linejoin="round"/>
<polyline points="-12,435 174,279.5 180,277 297,277" fill="none" stroke="url(#dots)" stroke-width="11" stroke-linecap="round" stroke-linejoin="round"/>
<polyline points="-12,458 0,473.3 17.3,499.2 28.1,527.2 37.8,576.9 43.2,589.9" fill="none" stroke="#b0b0b0" stroke-width="12.5" stroke-linecap="round" stroke-linejoin="round"/>
<polyline points="-12,458 0,473.3 17.3,499.2 28.1,527.2 37.8,576.9 43.2,589.9" fill="none" stroke="url(#dots)" stroke-width="11" stroke-linecap="round" stroke-linejoin="round"/>
<polyline points="43.2,589.9 54,618 67.5,651 102,702" fill="none" stroke="#b0b0b0" stroke-width="12.5" stroke-linecap="butt" stroke-linejoin="round"/>
<polyline points="43.2,589.9 54,618 67.5,651 102,702" fill="none" stroke="#fff" stroke-width="11" stroke-linecap="butt" stroke-linejoin="round"/>
<circle cx="227.5" cy="349.7" r="324.6" fill="rgba(74,123,248,0.2)" stroke="#3d85fd" stroke-width="3"/>
<text x="79" y="13.5" font-family="Liberation Sans" font-size="11" fill="#5a6279" text-anchor="middle" stroke="rgba(255,255,255,0.35)" stroke-width="1.6" paint-order="stroke">9B</text>
<text x="279.5" y="65.5" font-family="Liberation Sans" font-size="11" fill="#5a6279" text-anchor="middle" stroke="rgba(255,255,255,0.35)" stroke-width="1.6" paint-order="stroke">10</text>
<text x="349" y="156.5" font-family="Liberation Sans" font-size="11" fill="#5a6279" text-anchor="middle" stroke="rgba(255,255,255,0.35)" stroke-width="1.6" paint-order="stroke">6</text>
<text x="441.5" y="190.5" font-family="Liberation Sans" font-size="11" fill="#5a6279" text-anchor="middle" stroke="rgba(255,255,255,0.35)" stroke-width="1.6" paint-order="stroke">8</text>
<text x="244" y="316.5" font-family="Liberation Sans" font-size="11" fill="#5a6279" text-anchor="middle" stroke="rgba(255,255,255,0.35)" stroke-width="1.6" paint-order="stroke">3</text>
<text x="365.8" y="291.0" font-family="Liberation Sans" font-size="11" fill="#5a6279" text-anchor="middle" stroke="rgba(255,255,255,0.35)" stroke-width="1.6" paint-order="stroke">5</text>
<text x="170" y="232.5" font-family="Liberation Sans" font-size="11" fill="#5a6279" text-anchor="middle" stroke="rgba(255,255,255,0.35)" stroke-width="1.6" paint-order="stroke">7</text>
<text x="279.4" y="530.5" font-family="Liberation Sans" font-size="11" fill="#5a6279" text-anchor="middle" stroke="rgba(255,255,255,0.35)" stroke-width="1.6" paint-order="stroke">39</text>
<text x="431" y="507.5" font-family="Liberation Sans" font-size="11" fill="#5a6279" text-anchor="middle" stroke="rgba(255,255,255,0.35)" stroke-width="1.6" paint-order="stroke">33</text>
<text x="318.7" y="570.5" font-family="Liberation Sans" font-size="11" fill="#5a6279" text-anchor="middle" stroke="rgba(255,255,255,0.35)" stroke-width="1.6" paint-order="stroke">37</text>
<text x="324" y="619.5" font-family="Liberation Sans" font-size="11" fill="#5a6279" text-anchor="middle" stroke="rgba(255,255,255,0.35)" stroke-width="1.6" paint-order="stroke">35B</text>
<text x="369.4" y="608.0" font-family="Liberation Sans" font-size="11" fill="#5a6279" text-anchor="middle" stroke="rgba(255,255,255,0.35)" stroke-width="1.6" paint-order="stroke">35A</text>
<text x="143.6" y="650.5" font-family="Liberation Sans" font-size="11" fill="#5a6279" text-anchor="middle" stroke="rgba(255,255,255,0.35)" stroke-width="1.6" paint-order="stroke">43</text>
<text x="11.9" y="692.5" font-family="Liberation Sans" font-size="11" fill="#5a6279" text-anchor="middle" stroke="rgba(255,255,255,0.35)" stroke-width="1.6" paint-order="stroke">45</text>
<text x="364" y="3.5" font-family="Liberation Sans" font-size="11" fill="#5a6279" text-anchor="middle" stroke="rgba(255,255,255,0.35)" stroke-width="1.6" paint-order="stroke">12</text>
<text x="123.5" y="331.5" font-family="Liberation Sans" font-size="11.5" fill="#222" text-anchor="middle" stroke="rgba(255,255,255,0.35)" stroke-width="1.6" paint-order="stroke" transform="rotate(-41 123.5 331.5)">Vindgaf</text>
<text x="51.5" y="624" font-family="Liberation Sans" font-size="11.5" fill="#222" text-anchor="middle" stroke="rgba(255,255,255,0.35)" stroke-width="1.6" paint-order="stroke" transform="rotate(63 51.5 624)">Vindgaf</text>
<text x="89.5" y="693" font-family="Liberation Sans" font-size="11.5" fill="#222" text-anchor="middle" stroke="rgba(255,255,255,0.35)" stroke-width="1.6" paint-order="stroke" transform="rotate(57 89.5 693)">Vindgaf</text>
<text x="456" y="632" font-family="Liberation Sans" font-size="10.5" fill="#222" text-anchor="middle" stroke="rgba(255,255,255,0.35)" stroke-width="1.6" paint-order="stroke" transform="rotate(-16 456 632)">K</text>
<path d="M203.2 439.6 L216.8 439.6 L210 428 Z" fill="#3a84e4"/><path d="M207.4 439.7 L212.6 439.7 L210 434.2 Z" fill="#d4e9f0"/><path d="M207.6 426 L212.4 431 M212.4 426 L207.6 431" stroke="#3a84e4" stroke-width="1.2"/>
<text x="210" y="455" font-family="Liberation Sans" font-size="10.6" fill="#3b82e0" text-anchor="middle">Feldberg</text>
<text x="210" y="467" font-family="Liberation Sans" font-size="10.6" fill="#3b82e0" text-anchor="middle">Strand</text>
<text x="210" y="479" font-family="Liberation Sans" font-size="10.6" fill="#3b82e0" text-anchor="middle">Camping</text>
<path d="M213.8 631 Q214.5 627.2 220.2 627.2 Q225.9 627.2 226.6 631 Z" fill="#b5793a"/><rect x="213.6" y="631.8" width="13.2" height="1.5" rx="0.7" fill="#b5793a"/><path d="M213.8 634 L226.6 634 Q226.6 636 224.6 636 L215.8 636 Q213.8 636 213.8 634 Z" fill="#b5793a"/>
<circle cx="239.9" cy="630.4" r="2.6" fill="#a24bc8"/>
<text x="239" y="649" font-family="Liberation Sans" font-size="10" fill="#9a4fc4" text-anchor="middle">Butik Karen</text>
<text x="239" y="661" font-family="Liberation Sans" font-size="10" fill="#9a4fc4" text-anchor="middle">Sophie</text>
<path d="M338.6 609 L347.4 609 L346.2 619 L339.8 619 Z" fill="#b07830"/><rect x="337.8" y="607" width="10.4" height="1.4" fill="#b07830"/>
<text x="342.4" y="632" font-family="Liberation Sans" font-size="10" fill="#a0702e" text-anchor="middle">Kabyssen</text>
<g fill="none" stroke="#9a45c8" stroke-width="1.4" stroke-linecap="round"><circle cx="389.5" cy="600.5" r="1.3" fill="#9a45c8"/><path d="M388.5 603 L386.5 608 L390 610 L389 614 M387.5 606 L384.5 604.5 M387.2 605 L391.5 603 M386.5 608 L383.5 612 M390 610 L393 609"/></g>
<text x="388.8" y="627" font-family="Liberation Sans" font-size="10" fill="#9a4fc4" text-anchor="middle">Kites &amp;</text>
<text x="388.8" y="638.5" font-family="Liberation Sans" font-size="10" fill="#9a4fc4" text-anchor="middle">Coffee</text>
<path d="M244.3 551.6 L249 550.6 M244.3 553.4 L249 552.4 M245.8 554.8 L247.6 549.2" stroke="#444" stroke-width="0.7"/>
<rect x="10" y="10" width="34" height="64" rx="4" fill="rgba(0,0,0,0.2)"/>
<rect x="12" y="12" width="30" height="60" rx="2.5" fill="#fff"/>
<rect x="12" y="42" width="30" height="1" fill="#ccc"/>
<path d="M21 27 L33 27 M27 21 L27 33" stroke="#000" stroke-width="2.4"/>
<path d="M21.5 57.5 L32.5 57.5" stroke="#000" stroke-width="2.4"/>
<rect x="397" y="10" width="48" height="48" rx="6" fill="rgba(0,0,0,0.22)"/>
<rect x="399" y="12" width="44" height="44" rx="4.5" fill="#fff"/>
<path d="M421 47 L408 38.9 L421 30.7 L434 38.9 Z" fill="#bdbdbd" stroke="#a0a0a0" stroke-width="0.6"/>
<path d="M421 42.7 L408 34.5 L421 26.4 L434 34.5 Z" fill="#cdcdcd" stroke="#8f8f8f" stroke-width="0.6"/>
<path d="M421 38.3 L408 30.2 L421 22 L434 30.2 Z" fill="#dcdcdc" stroke="#8a8a8a" stroke-width="0.6"/>
<path d="M421 22.6 L433 30.2 L431.3 31.2 L421 25 L410.7 31.2 L409 30.2 Z" fill="#f3f3f3"/>
<rect x="315.5" y="683.5" width="140" height="16.5" fill="rgba(255,255,255,0.8)"/>
<text x="319.5" y="696" font-family="Liberation Sans" font-size="11" fill="#333"><tspan fill="#0078a8">Leaflet</tspan> | © <tspan fill="#0078a8">OpenStreetMap</tspan></text></svg>
</div>
</body></html>
